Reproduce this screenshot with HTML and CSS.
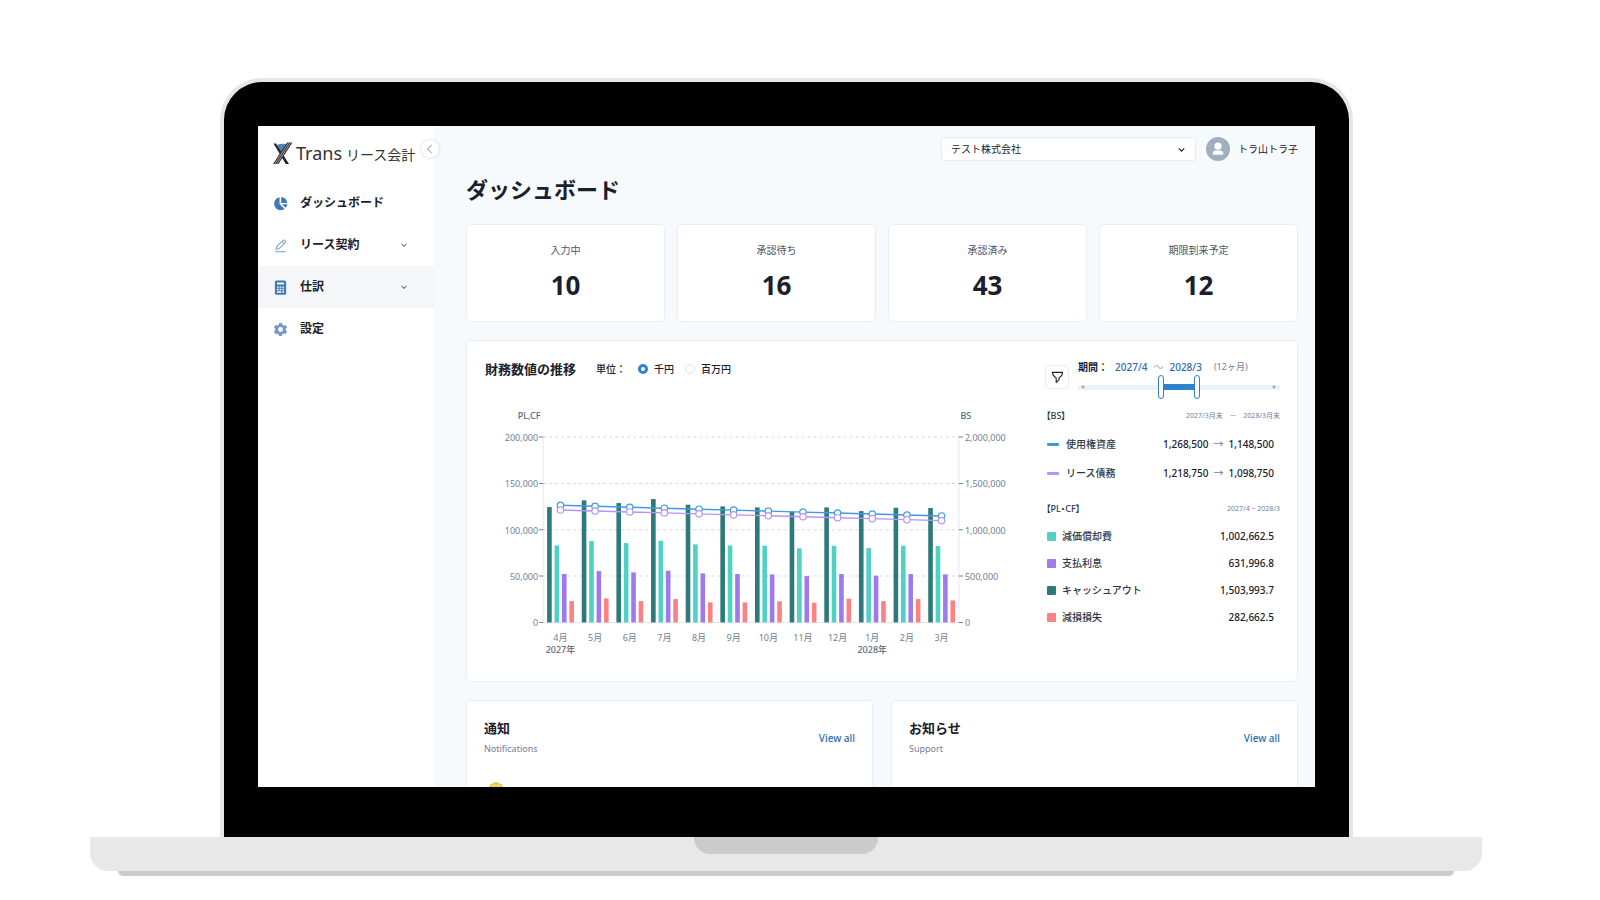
FILE: index.html
```
<!DOCTYPE html>
<html lang="ja">
<head>
<meta charset="UTF-8" />
<meta name="viewport" content="width=device-width, initial-scale=1" />
<title>Transリース会計 - ダッシュボード</title>
<link rel="stylesheet" href="styles.css">
</head>
<body>

<div class="laptop">
  <div class="lid">
    <div class="screen">

      <aside class="sidebar">
        <div class="logo">
          <svg class="logo-mark" viewBox="0 0 20 22" aria-hidden="true">
            <path d="M4 2.5 Q8 .5 13 1.5 L13.5 3.5 L8.6 10.5 Z" fill="#4a86c0" />
            <path d="M.5 1 L3 1 L16 21.5 H12.8 Z" fill="#222" />
            <path d="M14 0 H19.5 L5.5 21.5 H0 Z" fill="#333" />
            <path d="M15.8 0 L1.8 21.5 M17.8 0 L3.8 21.5" stroke="#fff" stroke-width=".5" />
          </svg>
          <span class="logo-text"><span class="logo-latin">Trans</span>リース会計</span>
        </div>
        <button class="btn-collapse" aria-label="メニューを閉じる">
          <svg viewBox="0 0 10 10"><path d="M6.5 1.5 L3 5 L6.5 8.5" /></svg>
        </button>

        <nav>
          <a href="#" class="nav-item">
            <svg class="nav-icon" viewBox="0 0 16 16" fill="#3f7ab8">
              <path d="M7 1.2 V8.6 L12.3 13.8 A7 7 0 1 1 7 1.2 Z" />
              <path d="M8.8 1 A6.6 6.6 0 0 1 15.2 7.4 H8.8 Z" />
              <path d="M9.6 8.8 H15.3 A7 7 0 0 1 13.4 12.6 Z" />
            </svg>
            <span>ダッシュボード</span>
          </a>
          <a href="#" class="nav-item">
            <svg class="nav-icon" viewBox="0 0 16 16" fill="none" stroke="#7ea6d0" stroke-width="1.2">
              <path d="M4 9.2 L10.6 2.6 Q12 1.6 13 2.8 Q14 3.8 12.9 5 L6.3 11.5 L3.4 12 Z M9.5 3.8 L11.8 6.1" />
              <path d="M2.5 14.6 H13.5" />
            </svg>
            <span>リース契約</span>
            <svg class="chevron" viewBox="0 0 8 8"><path d="M1.5 3 L4 5.4 L6.5 3" /></svg>
          </a>
          <a href="#" class="nav-item active">
            <svg class="nav-icon" viewBox="0 0 16 16">
              <rect x="2" y=".4" width="12" height="15.4" rx="1.8" fill="#3f7ab8" />
              <path d="M4.2 3.7 H11.8" stroke="#fff" stroke-width="2" />
              <path d="M4.2 7.6 H6 M7.1 7.6 H8.9 M10 7.6 H11.8 M4.2 10.2 H6 M7.1 10.2 H8.9 M10 10.2 H11.8 M4.2 12.8 H8.9 M10 12.8 H11.8" stroke="#fff" stroke-width="1.5" />
            </svg>
            <span>仕訳</span>
            <svg class="chevron" viewBox="0 0 8 8"><path d="M1.5 3 L4 5.4 L6.5 3" /></svg>
          </a>
          <a href="#" class="nav-item">
            <svg class="nav-icon" viewBox="0 0 16 16" fill="#7499c4">
              <path fill-rule="evenodd" d="M6.5 1 H9.5 L10 3 L11.5 3.9 L13.5 3.2 L15 5.9 L13.6 7.3 V8.8 L15 10.2 L13.5 12.8 L11.5 12.2 L10 13.1 L9.5 15 H6.5 L6 13.1 L4.5 12.2 L2.5 12.8 L1 10.2 L2.4 8.8 V7.3 L1 5.9 L2.5 3.2 L4.5 3.9 L6 3 Z M8 5.4 A2.6 2.6 0 1 0 8 10.6 A2.6 2.6 0 1 0 8 5.4 Z" />
            </svg>
            <span>設定</span>
          </a>
        </nav>
      </aside>

      <main>
        <header>
          <select class="company" aria-label="会社">
            <option selected>テスト株式会社</option>
          </select>
          <div class="user">
            <svg class="avatar" viewBox="0 0 24 24">
              <circle cx="12" cy="12" r="12" fill="#a0aec0" />
              <circle cx="12" cy="9.2" r="3.6" fill="#fff" />
              <path d="M6.6 17.8 Q6.6 13.6 10 13.6 H14 Q17.4 13.6 17.4 17.8 Z" fill="#fff" />
            </svg>
            <span>トラ山トラ子</span>
          </div>
        </header>

        <h1>ダッシュボード</h1>

        <section class="stats">
          <div class="card stat"><span>入力中</span><strong>10</strong></div>
          <div class="card stat"><span>承認待ち</span><strong>16</strong></div>
          <div class="card stat"><span>承認済み</span><strong>43</strong></div>
          <div class="card stat"><span>期限到来予定</span><strong>12</strong></div>
        </section>

        <section class="card finance">
          <div class="chart-side">
            <div class="chart-head">
              <h2>財務数値の推移</h2>
              <span class="unit-label">単位：</span>
              <label><input type="radio" name="unit" checked />千円</label>
              <label><input type="radio" name="unit" />百万円</label>
            </div>
            <svg id="chart" viewBox="0 0 540 270" role="img" aria-label="財務数値の推移"></svg>
          </div>

          <div class="summary">
            <div class="period">
              <button class="btn-filter" aria-label="絞り込み">
                <svg viewBox="0 0 14 14"><path d="M1.5 1.5 H12.5 L11.6 4.6 L8.6 7.6 V9.6 L5.6 12.2 V7.6 L2.4 4.6 Z" /></svg>
              </button>
              <div class="period-body">
                <div class="period-text">
                  <b>期間：</b><span class="date">2027/4</span><i>〜</i><span class="date">2028/3</span><small>(12ヶ月)</small>
                </div>
                <div class="slider">
                  <input type="range" min="0" max="100" value="41" aria-label="開始" />
                  <input type="range" min="0" max="100" value="59" aria-label="終了" />
                </div>
              </div>
            </div>

            <table class="bs">
              <tr class="table-head"><th>【BS】</th><td>2027/3月末 <i>－</i> 2028/3月末</td></tr>
              <tr><th><span class="line blue"></span>使用権資産</th><td>1,268,500<i>→</i>1,148,500</td></tr>
              <tr><th><span class="line violet"></span>リース債務</th><td>1,218,750<i>→</i>1,098,750</td></tr>
            </table>

            <table class="pl">
              <tr class="table-head"><th>【PL・CF】</th><td>2027/4 ~ 2028/3</td></tr>
              <tr><th><span class="box teal"></span>減価償却費</th><td>1,002,662.5</td></tr>
              <tr><th><span class="box purple"></span>支払利息</th><td>631,996.8</td></tr>
              <tr><th><span class="box dark"></span>キャッシュアウト</th><td>1,503,993.7</td></tr>
              <tr><th><span class="box red"></span>減損損失</th><td>282,662.5</td></tr>
            </table>
          </div>
        </section>

        <section class="news">
          <div class="card news-card">
            <div class="news-head">
              <div><h2>通知</h2><p>Notifications</p></div>
              <a href="#">View all</a>
            </div>
            <div class="news-row">
              <svg class="bell" viewBox="0 0 14 14"><path d="M.5 4 Q.5 1.8 3 2 Q4 0 7 0 Q10 0 11 2 Q13.5 1.8 13.5 4 V14 H.5 Z" fill="#ecc94b" /><path d="M3.5 4.5 Q5 2.5 6.5 3.5 M8 3.5 Q9.5 2.5 11 4.5" fill="none" stroke="#fff" stroke-width=".8" /></svg>
              <span>承認依頼が届いています</span>
            </div>
          </div>
          <div class="card news-card">
            <div class="news-head">
              <div><h2>お知らせ</h2><p>Support</p></div>
              <a href="#">View all</a>
            </div>
            <div class="news-row"><span>【重要】</span></div>
          </div>
        </section>
      </main>

    </div>
  </div>
  <div class="base"><div class="notch"></div></div>
  <div class="foot"></div>
</div>

<script>
  const months = ['4月', '5月', '6月', '7月', '8月', '9月', '10月', '11月', '12月', '1月', '2月', '3月'];
  const years = { 0: '2027年', 9: '2028年' };

  // 単位：千円
  const bars = [
    { color: '#2c7a7b', data: [124500, 131700, 128800, 133100, 127000, 125200, 124100, 119400, 124100, 120100, 123700, 123400] },
    { color: '#4fd1c5', data: [83100, 87800, 85600, 88100, 84200, 83100, 82700, 79900, 82700, 80200, 82700, 82400] },
    { color: '#9f7aea', data: [52200, 55400, 54000, 55800, 52900, 52200, 51800, 50000, 52200, 50400, 52200, 51800] },
    { color: '#fc8181', data: [23000, 25900, 23000, 25200, 21600, 21600, 22700, 21200, 25500, 23000, 25200, 23700] }
  ];
  const lines = [
    { color: '#4299e1', from: 1263600, to: 1148500 },
    { color: '#b794f4', from: 1212700, to: 1098750 }
  ];

  const plotLeft = 58, plotRight = 473, plotTop = 37, plotBottom = 222;
  const step = (plotRight - plotLeft) / months.length;
  const y = (value, max) => plotBottom - (plotBottom - plotTop) * value / max;
  let svg = '';

  svg += `<text class="axis-title" x="44" y="19" text-anchor="middle">PL,CF</text>`;
  svg += `<text class="axis-title" x="480" y="19" text-anchor="middle">BS</text>`;
  svg += `<path class="axis" d="M${plotLeft} ${plotTop} V${plotBottom} H${plotRight} V${plotTop}" />`;

  for (let i = 0; i <= 4; i++) {
    const ty = y(i, 4);
    if (i > 0) svg += `<path class="grid" d="M${plotLeft} ${ty} H${plotRight}" />`;
    svg += `<path class="tick" d="M${plotLeft - 4} ${ty} H${plotLeft} M${plotRight} ${ty} H${plotRight + 4}" />`;
    svg += `<text x="${plotLeft - 5}" y="${ty + 4}" text-anchor="end">${(i * 50000).toLocaleString('en-US')}</text>`;
    svg += `<text x="${plotRight + 6}" y="${ty + 4}">${(i * 500000).toLocaleString('en-US')}</text>`;
  }

  months.forEach((month, i) => {
    const x = plotLeft + step * i;
    bars.forEach((bar, n) => {
      const by = y(bar.data[i], 200000);
      svg += `<rect x="${x + 4 + n * 7.4}" y="${by}" width="4.6" height="${plotBottom - by}" fill="${bar.color}" />`;
    });
    svg += `<text x="${x + step / 2}" y="241" text-anchor="middle">${month}</text>`;
    if (years[i]) svg += `<text class="year" x="${x + step / 2}" y="253" text-anchor="middle">${years[i]}</text>`;
  });

  lines.forEach(line => {
    const points = months.map((m, i) => [
      plotLeft + step * (i + 0.5),
      y(line.from + (line.to - line.from) * i / 11, 2000000)
    ]);
    svg += `<polyline points="${points.join(' ')}" fill="none" stroke="${line.color}" stroke-width="1.4" />`;
    points.forEach(p => {
      svg += `<circle cx="${p[0]}" cy="${p[1]}" r="3.2" fill="#fff" stroke="${line.color}" stroke-width="1.2" />`;
    });
  });

  document.getElementById('chart').innerHTML = svg;
</script>

</body>
</html>
```
FILE: styles.css
```
* {
  box-sizing: border-box;
}
body {
  margin: 0;
  background: #fff;
  color: #1a202c;
  font-family: "Noto Sans", "Noto Sans CJK JP", sans-serif;
  font-size: 10px;
  line-height: 16px;
  overflow: hidden;
}
h1, h2, p {
  margin: 0;
}
a {
  color: inherit;
  text-decoration: none;
}
button {
  padding: 0;
  cursor: pointer;
}
i {
  font-style: normal;
}

/* laptop */
.laptop {
  padding: 78px 118px 0 90px;
}
.lid {
  margin: 0 129px 0 130px;
  padding: 44px 34px 50px;
  background: #000;
  border: 4px solid #e6e6e6;
  border-bottom: none;
  border-radius: 42px 42px 0 0;
}
.screen {
  display: flex;
  height: calc(100vh - 239px);
  background: #f7fafc;
  overflow: hidden;
}
.base {
  height: 34px;
  background: #e8e8e8;
  border-radius: 0 0 18px 18px;
}
.notch {
  width: 184px;
  height: 17px;
  margin: 0 auto;
  background: #cbcbcb;
  border-radius: 0 0 16px 16px;
}
.foot {
  height: 5px;
  margin: 0 28px;
  background: #cbcbcb;
  border-radius: 0 0 5px 5px;
}

/* sidebar */
.sidebar {
  position: relative;
  flex: 0 0 176px;
  background: #fff;
}
.logo {
  display: flex;
  align-items: center;
  gap: 3px;
  height: 56px;
  padding: 0 0 2px 15px;
}
.logo-mark {
  width: 20px;
  height: 23px;
}
.logo-text {
  font-family: "Noto Sans CJK JP", sans-serif;
  font-size: 14px;
  color: #333;
  white-space: nowrap;
}
.logo-latin {
  margin-right: 4px;
  font-family: "Noto Sans", sans-serif;
  font-size: 18px;
}
.btn-collapse {
  position: absolute;
  top: 14px;
  right: -5px;
  width: 18px;
  height: 18px;
  background: #fff;
  border: none;
  border-radius: 50%;
  box-shadow: 0 0 3px rgba(0,0,0,0.2);
}
.btn-collapse svg {
  display: block;
  width: 12px;
  margin: 0 auto;
  fill: none;
  stroke: #b5b5b5;
}
.nav-item {
  display: flex;
  align-items: center;
  gap: 12px;
  height: 42px;
  padding: 0 26px 0 15px;
  font-size: 12px;
  font-weight: 600;
}
.nav-item.active {
  background: #f5f6f7;
}
.nav-icon {
  width: 15px;
  height: 15px;
}
.chevron {
  width: 8px;
  height: 8px;
  margin-left: auto;
  fill: none;
  stroke: #2d3748;
}

/* main */
main {
  flex: 1;
  min-width: 0;
  padding: 11px 17px 0 32px;
}
header {
  display: flex;
  justify-content: flex-end;
  align-items: center;
  gap: 10px;
  height: 24px;
}
.company {
  width: 255px;
  height: 24px;
  padding: 0 9px;
  border: 1px solid #e8edf3;
  border-radius: 2px;
  appearance: none;
  background: #fff url("data:image/svg+xml,%3Csvg xmlns='http://www.w3.org/2000/svg' viewBox='0 0 8 8'%3E%3Cpath d='M1.5 3L4 5.5 6.5 3' fill='none' stroke='%231a202c'/%3E%3C/svg%3E") no-repeat right 9px center / 9px;
  color: #1a202c;
  font-family: inherit;
  font-size: 10px;
}
.user {
  display: flex;
  align-items: center;
  gap: 8px;
  font-size: 10px;
}
.avatar {
  width: 24px;
  height: 24px;
}
h1 {
  margin: 11px 0 18px;
  font-size: 22px;
  line-height: 34px;
}
.card {
  background: #fff;
  border: 1px solid #e8eef4;
  border-radius: 5px;
}
.stats {
  display: grid;
  grid-template-columns: repeat(4, 1fr);
  gap: 12px;
}
.stat {
  height: 98px;
  padding-top: 17px;
  text-align: center;
}
.stat span {
  display: block;
  color: #4a5568;
}
.stat strong {
  display: block;
  margin-top: 10px;
  font-size: 26px;
  line-height: 34px;
}
.finance {
  display: grid;
  grid-template-columns: 1fr 235px;
  gap: 19px;
  height: 342px;
  margin-top: 18px;
  padding: 18px 17px 18px 18px;
}
h2 {
  font-size: 13px;
  line-height: 20px;
}
.chart-head {
  display: flex;
  align-items: center;
  height: 20px;
}
.unit-label {
  margin: 0 12px 0 20px;
  font-weight: 500;
}
.chart-head label {
  display: flex;
  align-items: center;
  gap: 6px;
  margin-right: 11px;
  font-weight: 500;
}
.chart-head input {
  width: 10px;
  height: 10px;
  margin: 0;
  appearance: none;
  background: #fff;
  border: 1px solid #dde4ec;
  border-radius: 50%;
}
.chart-head input:checked {
  border: 3px solid #3182ce;
}
#chart {
  display: block;
  width: 100%;
  margin-top: 21px;
}
#chart text {
  font-size: 9px;
  fill: #718096;
}
#chart .axis-title, #chart .year {
  font-weight: 500;
  fill: #5a6678;
}
.axis {
  fill: none;
  stroke: #e2e8f0;
}
.grid {
  stroke: #d5dae0;
  stroke-dasharray: 3 3;
}
.tick {
  stroke: #718096;
}

/* summary */
.period {
  display: flex;
  align-items: flex-start;
  gap: 9px;
  height: 34px;
}
.btn-filter {
  width: 24px;
  height: 24px;
  margin-top: 6px;
  background: #fff;
  border: 1px solid #e8eef4;
  border-radius: 4px;
}
.btn-filter svg {
  display: block;
  width: 13px;
  margin: 0 auto;
  fill: none;
  stroke: #1a202c;
  stroke-width: 1.2;
  stroke-linejoin: round;
}
.period-body {
  flex: 1;
}
.period-text {
  display: flex;
  line-height: 16px;
  white-space: nowrap;
}
.period-text b {
  width: 37px;
  font-weight: 600;
}
.period-text i {
  width: 22px;
  color: #a0aec0;
  text-align: center;
}
.period-text small {
  margin-left: 12px;
  font-size: 9px;
  color: #718096;
}
.date {
  color: #2b6cb0;
  font-weight: 500;
}
.slider {
  position: relative;
  height: 24px;
  background:
    radial-gradient(circle at 5px 12px, #a0aec0 1px, transparent 2px),
    radial-gradient(circle at calc(100% - 6px) 12px, #a0aec0 1px, transparent 2px),
    linear-gradient(#3182ce, #3182ce) 82px 9px / 36px 6px no-repeat,
    linear-gradient(#edf2f7, #edf2f7) 0 10px / 100% 5px no-repeat;
}
.slider input {
  position: absolute;
  inset: 0;
  width: 100%;
  height: 24px;
  margin: 0;
  appearance: none;
  background: none;
  pointer-events: none;
}
.slider input::-webkit-slider-thumb {
  appearance: none;
  width: 6px;
  height: 24px;
  background: #fff;
  border: 1px solid #3182ce;
  border-radius: 3px;
  pointer-events: auto;
}
table {
  width: 100%;
  border-collapse: collapse;
}
.bs {
  margin-top: 9px;
}
.pl {
  margin-top: 8px;
}
tr {
  height: 27px;
}
.bs tr {
  height: 29px;
}
.bs .table-head, .pl .table-head {
  height: 27px;
}
th, td {
  padding: 0;
  white-space: nowrap;
}
th {
  padding-left: 1px;
  text-align: left;
  font-weight: 500;
  color: #2d3748;
}
td {
  padding-right: 6px;
  text-align: right;
  font-weight: 500;
}
td i {
  margin: 0 6px;
  color: #718096;
  font-weight: 400;
}
.bs td i {
  margin: 0 5px;
}
.table-head th {
  font-size: 9px;
  font-feature-settings: "palt";
}
.table-head td {
  padding-right: 0;
  font-size: 7px;
  font-weight: 400;
  color: #718096;
}
.line, .box {
  display: inline-block;
  vertical-align: middle;
}
.line {
  width: 12px;
  height: 3px;
  margin: 0 7px 0 1px;
  border-radius: 1px;
}
.box {
  width: 9px;
  height: 9px;
  margin: 0 6px 0 1px;
  border-radius: 1px;
}
.blue { background: #4299e1; }
.violet { background: #b794f4; }
.teal { background: #4fd1c5; }
.purple { background: #9f7aea; }
.dark { background: #2c7a7b; }
.red { background: #fc8181; }

/* news */
.news {
  display: grid;
  grid-template-columns: 1fr 1fr;
  gap: 18px;
  margin-top: 18px;
}
.news-card {
  height: 200px;
  padding: 17px;
}
.news-head {
  display: flex;
  justify-content: space-between;
  align-items: center;
  height: 39px;
}
.news-head p {
  margin-top: 3px;
  font-size: 9px;
  color: #718096;
}
.news-head a {
  color: #2b6cb0;
  font-weight: 500;
}
.news-row {
  display: flex;
  gap: 42px;
  margin-top: 25px;
}
.news-row span {
  padding-top: 2px;
  color: #4a5568;
}
.bell {
  width: 14px;
  height: 14px;
  margin-left: 5px;
}
```
